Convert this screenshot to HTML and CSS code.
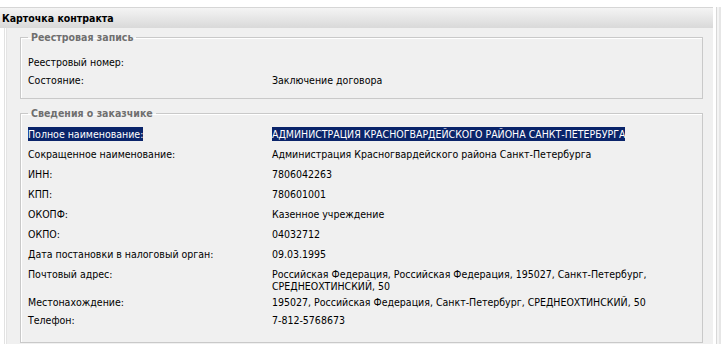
FILE: index.html
```html
<!DOCTYPE html>
<html lang="ru">
  <head>
    <meta charset="UTF-8" />
    <title>Карточка контракта</title>
    <link rel="stylesheet" href="styles.css">
  </head>
  <body>
    <div class="page">
      <div class="window">
        <div class="title">Карточка контракта</div>
        <div class="panel">
          <fieldset class="group group-first">
            <legend>Реестровая запись</legend>
            <div class="row short">
              <div class="label">Реестровый номер:</div>
              <div class="value"></div>
            </div>
            <div class="row short">
              <div class="label">Состояние:</div>
              <div class="value">Заключение договора</div>
            </div>
          </fieldset>

          <fieldset class="group group-last">
            <legend>Сведения о заказчике</legend>
            <div class="row">
              <div class="label"><span class="sel">Полное наименование:</span></div>
              <div class="value"><span class="sel">АДМИНИСТРАЦИЯ КРАСНОГВАРДЕЙСКОГО РАЙОНА САНКТ-ПЕТЕРБУРГА</span></div>
            </div>
            <div class="row">
              <div class="label">Сокращенное наименование:</div>
              <div class="value">Администрация Красногвардейского района Санкт-Петербурга</div>
            </div>
            <div class="row">
              <div class="label">ИНН:</div>
              <div class="value">7806042263</div>
            </div>
            <div class="row">
              <div class="label">КПП:</div>
              <div class="value">780601001</div>
            </div>
            <div class="row">
              <div class="label">ОКОПФ:</div>
              <div class="value">Казенное учреждение</div>
            </div>
            <div class="row">
              <div class="label">ОКПО:</div>
              <div class="value">04032712</div>
            </div>
            <div class="row">
              <div class="label">Дата постановки в налоговый орган:</div>
              <div class="value">09.03.1995</div>
            </div>
            <div class="row">
              <div class="label">Почтовый адрес:</div>
              <div class="value">Российская Федерация, Российская Федерация, 195027, Санкт-Петербург,<br>СРЕДНЕОХТИНСКИЙ, 50</div>
            </div>
            <div class="row short">
              <div class="label">Местонахождение:</div>
              <div class="value">195027, Российская Федерация, Санкт-Петербург, СРЕДНЕОХТИНСКИЙ, 50</div>
            </div>
            <div class="row">
              <div class="label">Телефон:</div>
              <div class="value">7-812-5768673</div>
            </div>
          </fieldset>
        </div>
      </div>
      <div class="edge"></div>
    </div>
  </body>
</html>
```

FILE: styles.css
```css
body {
  margin: 0;
  background: #ffffff;
  font-family: "DejaVu Sans Condensed", "DejaVu Sans", sans-serif;
  font-size: 10.5px;
  color: #000;
}

.page {
  display: flex;
  padding-top: 7px;
  height: 337px;
  overflow: hidden;
}

.window {
  width: 713px;
  display: flex;
  flex-direction: column;
}

.title {
  height: 20px;
  line-height: 20px;
  padding-left: 2px;
  font-weight: bold;
  border-top: 1px solid #d6d6d6;
  background: linear-gradient(#f4f4f4, #d9d9d9);
}

.panel {
  flex: 1;
  background: #f0f0f0;
  margin-left: 5px;
  border-left: 1px solid #ffffff;
  box-shadow: -1px 0 0 #e2e2e2, inset 1px 0 0 #e4e4e4;
  padding: 3px 10px 0 14px;
}

.group {
  margin: 0 0 8px;
  padding: 4px 8px 0 7px;
  border: 1px solid #c9c9c9;
  box-shadow: 1px 1px 0 #ffffff inset;
}

.group-first {
  padding-top: 8px;
  padding-bottom: 10px;
}

.group-last {
  padding-bottom: 12px;
}

.group legend {
  padding: 0 3px;
  line-height: 13px;
  color: #6f6f6f;
  font-weight: bold;
}

.row {
  display: flex;
  min-height: 20px;
  padding-top: 4px;
  box-sizing: border-box;
  line-height: 12px;
}

.row.short {
  min-height: 18px;
}

.label {
  width: 244px;
  flex: none;
}

.value {
  flex: 1;
}

.sel {
  background: #0a246a;
  color: #ffffff;
  padding: 1px 0;
}

.edge {
  flex: 1;
  background: #f4f4f4;
  border-left: 3px solid #ffffff;
  box-shadow: inset 1px 0 0 #d8d8d8, inset -2px 0 0 #e6e6e6;
}
```
